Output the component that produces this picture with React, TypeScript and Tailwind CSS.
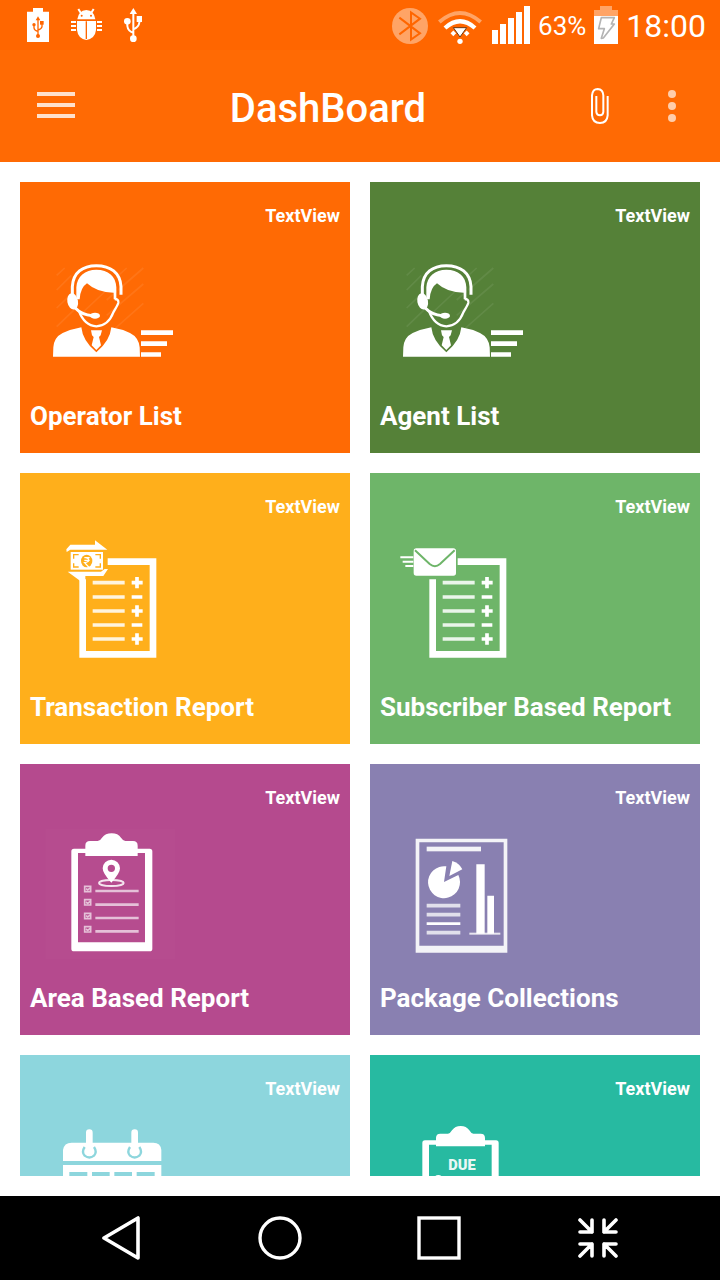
import React from "react";

const white = "#ffffff";

function BatteryUsbIcon() {
  return (
    <svg className="h-[34px] w-[22px]" viewBox="0 0 66 102" aria-hidden="true">
      <path d="M0 11H18V0H48V11H66V102H0Z" fill={white} />
      <g stroke="#ff6600" strokeWidth="4" fill="none">
        <path d="M33 32V84M21 52V60Q22 68 33 70M45 46V56Q44 63 33 66" />
      </g>
      <g fill="#ff6600">
        <path d="M33 25L40 37H26Z" />
        <circle cx="33" cy="84" r="6" />
        <circle cx="21" cy="50" r="5" />
        <rect x="39" y="39" width="11" height="11" />
      </g>
    </svg>
  );
}

function BugIcon() {
  return (
    <svg className="h-[34px] w-[31px]" viewBox="0 0 93 102" aria-hidden="true">
      <path d="M22 3L30 16M68 3L60 16" stroke={white} strokeWidth="6" />
      <path d="M19 34Q22 8 46 6Q70 8 73 34Z" fill={white} />
      <circle cx="32" cy="23" r="3" fill="#ff6600" />
      <circle cx="60" cy="23" r="3" fill="#ff6600" />
      <path d="M18 39H75V66Q72 92 46 96Q21 92 18 66Z" fill={white} />
      <path d="M46 40V93" stroke="#ff6600" strokeWidth="4" />
      <path
        d="M0 42H15M0 54H15M0 66H15M78 42H93M78 54H93M78 66H93"
        stroke={white}
        strokeWidth="6"
      />
    </svg>
  );
}

function UsbIcon() {
  return (
    <svg className="h-[34px] w-[18px]" viewBox="0 0 54 102" aria-hidden="true">
      <g stroke={white} strokeWidth="6" fill="none">
        <path d="M28 14V92M10 42V54Q12 70 28 74M46 34V44Q44 58 28 64" />
      </g>
      <g fill={white}>
        <path d="M28 0L39 18H17Z" />
        <circle cx="28" cy="92" r="10" />
        <circle cx="10" cy="40" r="10" />
        <rect x="38" y="24" width="16" height="18" />
      </g>
    </svg>
  );
}

function BluetoothIcon() {
  return (
    <svg className="h-9 w-9" viewBox="0 0 108 108" aria-hidden="true">
      <circle cx="54" cy="54" r="54" fill="#ffa466" />
      <path
        d="M22 29L84 76L57 95V13L84 32L22 79"
        fill="none"
        stroke="#ff6600"
        strokeWidth="6"
      />
    </svg>
  );
}

function WifiIcon() {
  return (
    <svg className="h-[38px] w-11" viewBox="0 0 132 114" aria-hidden="true">
      <path d="M4 48Q66 -6 128 48" fill="none" stroke="#ffa466" strokeWidth="12" />
      <path d="M21 66Q66 26 111 66" fill="none" stroke={white} strokeWidth="13" />
      <rect x="40" y="76" width="12" height="12" fill={white} transform="rotate(45 46 82)" />
      <rect x="80" y="76" width="12" height="12" fill={white} transform="rotate(45 86 82)" />
      <path d="M46 65H86L66 93Z" fill={white} stroke="#6b3a15" strokeWidth="3" />
      <circle cx="66" cy="106" r="8" fill={white} />
    </svg>
  );
}

function SignalIcon() {
  return (
    <svg className="h-[38px] w-[38px]" viewBox="0 0 38 38" fill={white} aria-hidden="true">
      <path d="M0 24H6V38H0ZM8 18H14V38H8ZM16 12H22V38H16ZM24 6H30V38H24ZM32 0H38V38H32Z" />
    </svg>
  );
}

function BatteryIcon() {
  return (
    <svg className="h-[38px] w-6" viewBox="0 0 72 114" aria-hidden="true">
      <path d="M0 12H18V0H54V12H72V30H0Z" fill="#ffa466" />
      <path d="M0 30H72V114H0Z" fill={white} />
      <path
        d="M22 35H61L52 54H61L28 96L22 97L31 68H14Z"
        fill="none"
        stroke="#b4b4b4"
        strokeWidth="5"
        strokeLinejoin="round"
      />
    </svg>
  );
}

function OperatorArt({ color }: { color: string }) {
  return (
    <g>
      <path
        d="M80 106L104 84M80 150L124 106M80 204L126 160M80 260L140 202M250 120L290 84M230 180L340 84M230 226L340 132M250 270L340 190M150 225L230 150"
        stroke={white}
        strokeWidth="5"
        opacity="0.07"
      />
      <path
        d="M69 350L70 322Q72 292 98 279Q126 267 154 262Q158 303 199 337Q240 303 244 262Q274 267 300 279Q326 292 329 322L330 350Z"
        fill={white}
      />
      <path d="M183 271H216L212 286L207 291L213 316L199 330L185 316L191 291L186 286Z" fill={white} />
      <path
        d="M127 168V140C129 98 158 77 199 77C241 77 271 98 273 140V164"
        fill="none"
        stroke={white}
        strokeWidth="9"
      />
      <path
        d="M136 178V142C138 106 162 87 199 87C237 87 261 106 263 142V164"
        fill="none"
        stroke={color}
        strokeWidth="4"
      />
      <path
        d="M139 178V142C141 109 165 89 199 89C235 89 258 109 259 142V178H251V158Q201 158 171 130Q151 143 149 178Z"
        fill={white}
      />
      <path
        d="M254 177Q266 177 265 188Q264 194 250 217Q235 257 199 259Q163 257 146 211"
        fill="none"
        stroke={white}
        strokeWidth="7"
      />
      <ellipse cx="128" cy="184" rx="16" ry="25" fill={white} transform="rotate(-10 128 184)" />
      <path d="M135 203Q154 224 188 227" fill="none" stroke={white} strokeWidth="9" />
      <ellipse cx="195" cy="227" rx="15" ry="9" fill={white} />
      <path d="M333 271H429V285H333ZM333 304H411V318H333ZM333 337H393V350H333Z" fill={white} />
    </g>
  );
}

function ReportSheet() {
  return (
    <g fill="none" stroke={white}>
      <path d="M203 95H339V373H128V148" strokeWidth="20" />
      <path
        d="M158 158H254M158 201H254M158 243H254M158 285H254M158 327H254"
        strokeWidth="11"
        opacity="0.86"
      />
      <path
        d="M275 158H308M291 141V175M275 201H307M275 243H308M291 226V260M275 285H307M275 327H308M291 310V344"
        strokeWidth="11"
      />
    </g>
  );
}

function TransactionArt({ color }: { color: string }) {
  return (
    <g transform="translate(30 -3)">
      <ReportSheet />
      <path d="M80 66L79 58L91 44H165V31L202 59H91Z" fill={white} />
      <path d="M83 125H183L194 117H204L190 138H136V153H121Z" fill={white} />
      <rect x="92" y="66" width="97" height="53" fill={white} />
      <path
        d="M101 86V74H116M166 74H181V86M181 100V111H166M116 111H101V100"
        fill="none"
        stroke={color}
        strokeWidth="4"
      />
      <ellipse cx="140" cy="93" rx="17" ry="19" fill={color} />
      <path
        d="M133 83H149M133 91H149M137 83Q149 85 145 94Q140 98 134 98L147 112"
        fill="none"
        stroke={white}
        strokeWidth="4"
      />
    </g>
  );
}

function SubscriberArt({ color }: { color: string }) {
  return (
    <g transform="translate(30 -3)">
      <ReportSheet />
      <rect x="71" y="55" width="127" height="82" rx="8" fill={white} />
      <path
        d="M75 61L119 102Q135 115 150 102L194 61"
        fill="none"
        stroke={color}
        strokeWidth="6"
      />
      <path d="M31 82H70M38 95H70M46 108H70" stroke={white} strokeWidth="6" />
    </g>
  );
}

function AreaArt() {
  return (
    <g transform="translate(30 -6)">
      <rect x="16" y="27" width="390" height="390" fill={white} opacity="0.015" />
      <path
        fillRule="evenodd"
        d="M102 86H329Q337 86 337 94V386Q337 394 329 394H102Q94 394 94 386V94Q94 86 102 86ZM114 99V367H315V99Z"
        fill={white}
      />
      <path
        d="M136 108V77Q136 63 150 63H173Q182 61 186 53Q196 40 215 40Q234 40 243 53Q248 61 256 63H279Q293 63 293 77V108Z"
        fill={white}
      />
      <ellipse cx="214" cy="189" rx="37" ry="9" fill="none" stroke={white} strokeWidth="6" opacity="0.85" />
      <path
        fillRule="evenodd"
        d="M214 188Q188 160 188 145A26 26 0 0 1 240 145Q240 160 214 188ZM214 134A11 11 0 1 0 214 156A11 11 0 1 0 214 134Z"
        fill={white}
      />
      <g fill="none" stroke={white} strokeWidth="5" opacity="0.65">
        <path d="M134 199H152V215H134ZM134 239H152V255H134ZM134 280H152V296H134ZM134 320H152V336H134Z" />
        <path d="M138 206L143 210L152 203M138 246L143 250L152 243M138 287L143 291L152 284M138 327L143 331L152 324" />
      </g>
      <path
        d="M166 213H296M166 254H296M166 294H296M166 334H296"
        stroke={white}
        strokeWidth="8"
        opacity="0.65"
      />
    </g>
  );
}

function PackageArt() {
  return (
    <g transform="translate(30 -6)">
      <path
        fillRule="evenodd"
        d="M77 56H352V398H77ZM88 67V377H341V67Z"
        fill={white}
        opacity="0.9"
      />
      <rect x="110" y="80" width="163" height="14" fill={white} opacity="0.9" />
      <path d="M162 186L169 139A48 48 0 1 0 205 165Z" fill={white} />
      <path d="M178 168L187 123Q207 128 217 148Z" fill={white} />
      <path
        d="M110 257H211M110 284H211M110 338H211"
        stroke={white}
        strokeWidth="11"
        opacity="0.75"
      />
      <path d="M110 311H211" stroke={white} strokeWidth="8" />
      <path d="M259 133H284V341H259ZM292 227H312V341H292Z" fill={white} />
      <path d="M238 341H331" stroke={white} strokeWidth="6" opacity="0.8" />
    </g>
  );
}

function CalendarArt({ color }: { color: string }) {
  return (
    <g transform="translate(30 -9)">
      <path d="M69 153V120Q72 98 95 98H340Q362 98 364 120V153Z" fill={white} />
      <g fill="none" stroke={color} strokeWidth="7">
        <path d="M134 111Q124 126 134 137Q148 148 162 137Q172 126 162 111" />
        <path d="M270 111Q260 126 270 137Q284 148 298 137Q308 126 298 111" />
      </g>
      <path d="M148 68V128M284 68V128" stroke={white} strokeWidth="20" strokeLinecap="round" />
      <path
        fillRule="evenodd"
        d="M69 165H364V370H69ZM88 186V232H142V186ZM156 186V232H209V186ZM223 186V232H276V186ZM290 186V232H344V186ZM88 246V292H142V246ZM156 246V292H209V246ZM223 246V292H276V246ZM290 246V292H344V246ZM88 306V352H142V306ZM156 306V352H209V306ZM223 306V352H276V306ZM290 306V352H344V306Z"
        fill={white}
      />
    </g>
  );
}

function DueArt() {
  return (
    <g transform="translate(30 -9)">
      <path
        fillRule="evenodd"
        d="M105 91H318Q326 91 326 99V386H97V99Q97 91 105 91ZM117 104V367H305V104Z"
        fill={white}
      />
      <path
        d="M138 109V84Q138 71 151 71H174Q181 70 186 61Q195 48 212 48Q229 48 238 61Q243 70 250 71H272Q285 71 285 84V109Z"
        fill={white}
      />
      <text
        x="216"
        y="179"
        textAnchor="middle"
        fontFamily="Roboto, sans-serif"
        fontWeight="900"
        fontSize="44"
        fill={white}
        opacity="0.9"
      >
        DUE
      </text>
      <circle cx="145" cy="207" r="12" fill={white} />
      <path d="M170 210H285M170 250H285M170 290H285" stroke={white} strokeWidth="8" />
    </g>
  );
}

type Tile = { id: string; label?: string; bg: string; art: React.ReactNode };

const tiles: Tile[] = [
  { id: "operator", label: "Operator List", bg: "bg-[#ff6a04]", art: <OperatorArt color="#ff6a04" /> },
  { id: "agent", label: "Agent List", bg: "bg-[#558138]", art: <OperatorArt color="#558138" /> },
  { id: "transaction", label: "Transaction Report", bg: "bg-[#ffaf1b]", art: <TransactionArt color="#ffaf1b" /> },
  { id: "subscriber", label: "Subscriber Based Report", bg: "bg-[#6eb569]", art: <SubscriberArt color="#6eb569" /> },
  { id: "area", label: "Area Based Report", bg: "bg-[#b54a8e]", art: <AreaArt /> },
  { id: "package", label: "Package Collections", bg: "bg-[#8980b1]", art: <PackageArt /> },
  { id: "calendar", bg: "bg-[#8dd6dd]", art: <CalendarArt color="#8dd6dd" /> },
  { id: "due", bg: "bg-[#27baa1]", art: <DueArt /> },
];

function TileCard({ label, bg, art }: Tile) {
  return (
    <button
      type="button"
      className={`flex flex-col px-[10px] pt-6 pb-[23px] text-left font-bold text-white ${bg}`}
    >
      <span className="self-end text-[18px] leading-5">TextView</span>
      <svg className="mt-[14px] h-[140px] w-40" viewBox="0 0 480 420" aria-hidden="true">
        {art}
      </svg>
      {label && <span className="mt-[22px] text-[26px] leading-7">{label}</span>}
    </button>
  );
}

const navButton = "flex flex-1 items-center justify-center";

export default function App() {
  return (
    <div className="flex h-screen flex-col bg-white font-['Roboto',sans-serif]">
      <div className="flex h-[50px] shrink-0 items-center justify-between bg-[#ff6600] pr-[14px] pl-[27px] text-white">
        <div className="flex items-center gap-[22px]">
          <BatteryUsbIcon />
          <BugIcon />
          <UsbIcon />
        </div>
        <div className="flex items-end gap-2">
          <div className="flex items-end gap-[10px]">
            <BluetoothIcon />
            <WifiIcon />
            <SignalIcon />
          </div>
          <span className="text-[26px] leading-9">63%</span>
          <BatteryIcon />
          <span className="text-[32px] leading-9">18:00</span>
        </div>
      </div>

      <header className="flex h-28 shrink-0 items-center bg-[#ff6a04] pr-3 pl-5 text-white">
        <button type="button" aria-label="Open menu" className="flex h-full w-[72px] items-center justify-center">
          <svg className="h-7 w-[38px]" viewBox="0 0 38 28" aria-hidden="true">
            <path d="M0 2H38M0 13H38M0 24H38" stroke="#ffe1cd" strokeWidth="4" />
          </svg>
        </button>
        <h1 className="flex-1 pt-[6px] text-center text-[40px] leading-12 font-medium">DashBoard</h1>
        <button type="button" aria-label="Attach" className="flex h-full w-[72px] items-center justify-center">
          <svg className="h-9 w-[18px]" viewBox="0 0 54 108" fill="none" aria-hidden="true">
            <path
              d="M50 24V82Q48 105 27 105Q5 105 3 82V22Q5 3 20 3Q36 4 37 22V72Q36 82 27 82Q17 82 16 72V24"
              stroke={white}
              strokeWidth="6"
            />
          </svg>
        </button>
        <button type="button" aria-label="More options" className="flex h-full w-[72px] items-center justify-center">
          <svg className="h-8 w-2" viewBox="0 0 8 32" fill="#ffcdab" aria-hidden="true">
            <circle cx="4" cy="4" r="4" />
            <circle cx="4" cy="16" r="4" />
            <circle cx="4" cy="28" r="4" />
          </svg>
        </button>
      </header>

      <main className="flex min-h-0 flex-1 flex-col p-5">
        <div className="grid min-h-0 flex-1 auto-rows-max grid-cols-2 gap-5 overflow-y-auto [scrollbar-width:none]">
          {tiles.map((tile) => (
            <TileCard key={tile.id} {...tile} />
          ))}
        </div>
      </main>

      <nav aria-label="System" className="flex h-[84px] shrink-0 bg-black pr-[43px] pl-[41px]">
        <button type="button" aria-label="Back" className={navButton}>
          <svg className="h-11 w-[38px]" viewBox="0 0 38 44" fill="none" aria-hidden="true">
            <path d="M36 2V42L2 22Z" stroke={white} strokeWidth="3.6" strokeLinejoin="round" />
          </svg>
        </button>
        <button type="button" aria-label="Home" className={navButton}>
          <svg className="h-11 w-11" viewBox="0 0 44 44" fill="none" aria-hidden="true">
            <circle cx="22" cy="22" r="20" stroke={white} strokeWidth="3.4" />
          </svg>
        </button>
        <button type="button" aria-label="Recent apps" className={navButton}>
          <svg className="h-11 w-11" viewBox="0 0 44 44" fill="none" aria-hidden="true">
            <rect x="2" y="2" width="40" height="40" stroke={white} strokeWidth="3.4" />
          </svg>
        </button>
        <button type="button" aria-label="Collapse" className={navButton}>
          <svg
            className="h-10 w-10"
            viewBox="0 0 40 40"
            fill="none"
            stroke={white}
            strokeWidth="3.6"
            strokeLinecap="round"
            strokeLinejoin="round"
            aria-hidden="true"
          >
            <path d="M2 2L14 14M14 2V14H2M38 2L26 14M26 2V14H38M2 38L14 26M14 38V26H2M38 38L26 26M26 38V26H38" />
          </svg>
        </button>
      </nav>
    </div>
  );
}
